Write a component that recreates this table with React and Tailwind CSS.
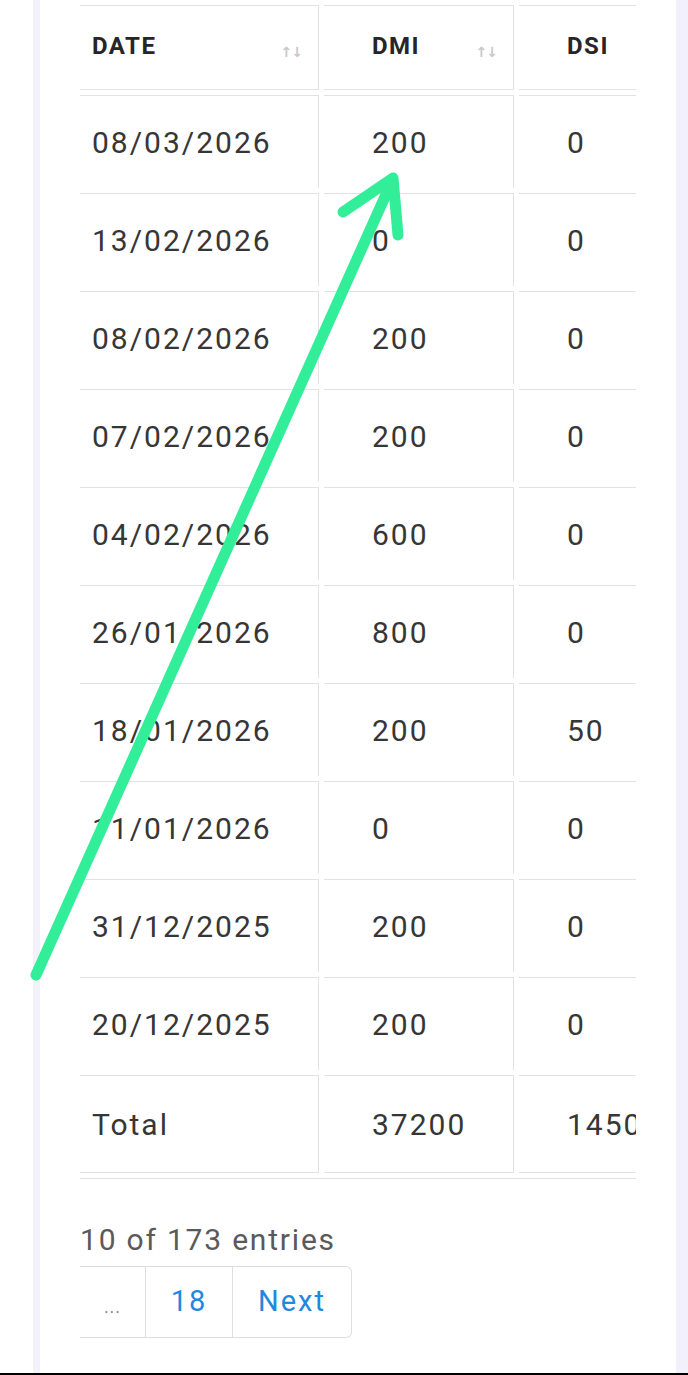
const rows = [
  ["08/03/2026", "200", "0"],
  ["13/02/2026", "0", "0"],
  ["08/02/2026", "200", "0"],
  ["07/02/2026", "200", "0"],
  ["04/02/2026", "600", "0"],
  ["26/01/2026", "800", "0"],
  ["18/01/2026", "200", "50"],
  ["11/01/2026", "0", "0"],
  ["31/12/2025", "200", "0"],
  ["20/12/2025", "200", "0"],
];

const SortIcon = () => (
  <span className="mt-[12px] text-[14px] leading-none tracking-[-1px] text-[#c8c8c8] font-['DejaVu_Sans',sans-serif]">
    ↑↓
  </span>
);

const HeadCell = ({ label, sort, width }) => (
  <th
    className={`${width} h-[85px] border-t border-r border-b border-[#e2e2e2] p-0 text-left align-middle`}
  >
    <div className="flex items-center justify-between pb-[3px] pl-12 pr-[16px]">
      <span className="text-[24px] font-bold tracking-[1.5px] text-[#262626]">
        {label}
      </span>
      {sort && <SortIcon />}
    </div>
  </th>
);

const Cell = ({ children, last }) => (
  <td
    className={`border-t border-r border-[#e2e2e2] p-0 pl-12 text-left align-middle whitespace-nowrap ${
      last ? "h-[98px] border-b" : "h-[93px]"
    }`}
  >
    {children}
  </td>
);

export default function App() {
  return (
    <div className="relative h-[1375px] overflow-hidden bg-white font-['Roboto',sans-serif]">
      <div className="flex h-[1373px] pl-[33px]">
        <div className="w-[7px] shrink-0 bg-[#f3f2fb]" />
        <div className="min-w-0 flex-1 bg-white px-10">
          {/* tabel */}
          <div className="overflow-hidden border-b border-[#e2e2e2]">
            <table className="-ml-[41px] w-[655px] min-w-[655px] table-fixed border-separate border-spacing-[5px]">
              <thead>
                <tr>
                  <HeadCell label="DATE" sort width="w-[275px]" />
                  <HeadCell label="DMI" sort width="w-[190px]" />
                  <HeadCell label="DSI" width="w-[170px]" />
                </tr>
              </thead>
              <tbody className="text-[30px] tracking-[2px] text-[#363636]">
                {rows.map((r) => (
                  <tr key={r[0]}>
                    <Cell>{r[0]}</Cell>
                    <Cell>{r[1]}</Cell>
                    <Cell>{r[2]}</Cell>
                  </tr>
                ))}
                <tr>
                  <Cell last>Total</Cell>
                  <Cell last>37200</Cell>
                  <Cell last>1450</Cell>
                </tr>
              </tbody>
            </table>
          </div>

          {/* info + pagination */}
          <p className="mt-[43px] text-[30px] leading-[36px] tracking-[1.8px] text-[#5a5a5a]">
            10 of 173 entries
          </p>
          <div className="mt-[8px] flex h-[72px] w-[272px] rounded-r-md border border-l-0 border-[#dedede] text-[29px] tracking-[2px]">
            <div className="flex w-[66px] items-center justify-center border-r border-[#dedede] pt-[8px] text-[18px] tracking-[1px] text-[#8a8a8a]">
              ...
            </div>
            <div className="flex w-[87px] items-center justify-center border-r border-[#dedede] text-[#2188dd]">
              18
            </div>
            <div className="flex flex-1 items-center justify-center text-[#2188dd]">
              Next
            </div>
          </div>
        </div>
        <div className="w-[12px] shrink-0 bg-[#f2f1fb]" />
      </div>
      <div className="h-[2px] bg-black" />

      {/* panah hijau */}
      <svg
        className="pointer-events-none absolute inset-0"
        width="688"
        height="1375"
        viewBox="0 0 688 1375"
      >
        <g
          fill="none"
          stroke="#33ee98"
          strokeWidth="11"
          strokeLinecap="round"
          strokeLinejoin="round"
        >
          <path d="M36 975 L392 181" />
          <path d="M343 212 L393 178 L398 235" />
        </g>
      </svg>
    </div>
  );
}
